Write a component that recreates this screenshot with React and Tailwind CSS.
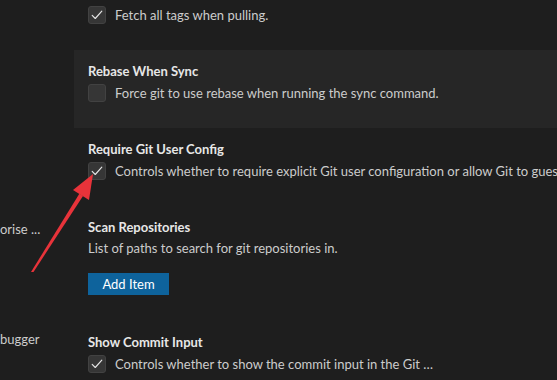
import React from "react"

const Check = ({ checked }) => (
    <div className="w-[18px] h-[18px] shrink-0 rounded-[3px] bg-[#363636] border border-[#424242] flex items-center justify-center">
        {checked && (
            <svg width="14" height="14" viewBox="0 0 16 16" fill="none">
                <path d="M2.5 8.5 L6 12 L13.5 3.5" stroke="#e6e6e6" strokeWidth="1.3" strokeLinecap="round" strokeLinejoin="round" />
            </svg>
        )}
    </div>
)

const Setting = ({ title, children, highlight }) => (
    <div className={"pl-[14px] pt-[12px] pb-[26px] " + (highlight ? "bg-[#262626]" : "")}>
        <div className="h-[18px] leading-[18px] font-bold text-[#e7e7e7]">{title}</div>
        {children}
    </div>
)

const CheckRow = ({ checked, label }) => (
    <div className="flex items-center gap-[9px] mt-[4px] h-[18px]">
        <Check checked={checked} />
        <span className="whitespace-nowrap text-[#cccccc] leading-[18px]">{label}</span>
    </div>
)

export default function App() {
    return (
        <div className="relative w-[557px] h-[380px] overflow-hidden bg-[#1e1e1e] text-[13px]" style={{ fontFamily: "Lato, 'Noto Sans', sans-serif" }}>
            <div className="flex h-full">
                <div className="w-[74px] shrink-0 text-[#cccccc] whitespace-nowrap overflow-hidden">
                    <div className="h-[18px] leading-[18px] mt-[220px]">orise ...</div>
                    <div className="h-[18px] leading-[18px] mt-[92px]">bugger</div>
                </div>
                <div className="flex-1 min-w-0 overflow-hidden mt-[-28px]">
                    <Setting title="Pull Tags">
                        <CheckRow checked label="Fetch all tags when pulling." />
                    </Setting>
                    <Setting title="Rebase When Sync" highlight>
                        <CheckRow label="Force git to use rebase when running the sync command." />
                    </Setting>
                    <Setting title="Require Git User Config">
                        <CheckRow checked label="Controls whether to require explicit Git user configuration or allow Git to guess if missing." />
                    </Setting>
                    <div className="pl-[14px] pt-[12px] pb-[26px]">
                        <div className="h-[18px] leading-[18px] font-bold text-[#e7e7e7]">Scan Repositories</div>
                        <div className="mt-[3px] h-[18px] leading-[18px] text-[#cccccc]">List of paths to search for git repositories in.</div>
                        <button className="mt-[16px] h-[22px] w-[81px] bg-[#0e639c] text-white leading-[22px]">Add Item</button>
                    </div>
                    <Setting title="Show Commit Input">
                        <CheckRow checked label="Controls whether to show the commit input in the Git …" />
                    </Setting>
                </div>
            </div>
            <svg className="absolute inset-0 pointer-events-none" width="557" height="380" viewBox="0 0 557 380">
                <polygon points="31,272 33.5,272 83,196 79.5,193.5" fill="#e8333a" />
                <polygon points="93,174 89,200 73,190" fill="#e8333a" />
            </svg>
        </div>
    )
}
